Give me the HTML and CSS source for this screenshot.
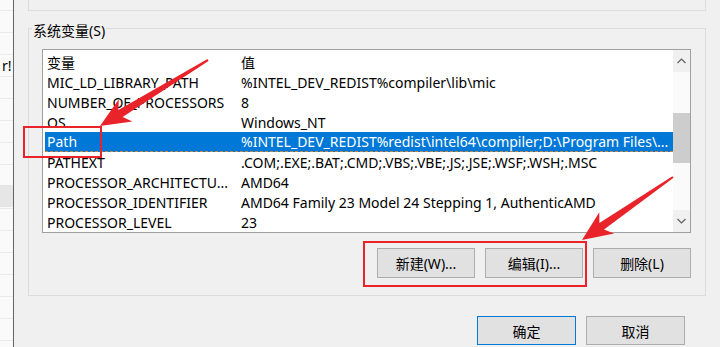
FILE: index.html
```html
<!DOCTYPE html>
<html lang="zh-CN">
<head>
    <meta charset="UTF-8">
    <title>环境变量</title>
    <link rel="stylesheet" href="styles.css">
</head>
<body>
    <div class="screen">
        <div class="behind">
            <div class="behind-text">r!</div>
            <div class="behind-block"></div>
        </div>
        <div class="dialog">
            <div class="upper-group"></div>
            <div class="group">
                <div class="legend">系统变量(S)</div>
                <div class="listbox">
                    <div class="list">
                        <div class="row"><span class="c1">变量</span><span class="c2">值</span></div>
                        <div class="row"><span class="c1">MIC_LD_LIBRARY_PATH</span><span class="c2">%INTEL_DEV_REDIST%compiler\lib\mic</span></div>
                        <div class="row"><span class="c1">NUMBER_OF_PROCESSORS</span><span class="c2">8</span></div>
                        <div class="row"><span class="c1">OS</span><span class="c2">Windows_NT</span></div>
                        <div class="row selected"><span class="c1">Path</span><span class="c2">%INTEL_DEV_REDIST%redist\intel64\compiler;D:\Program Files\...</span></div>
                        <div class="row"><span class="c1">PATHEXT</span><span class="c2">.COM;.EXE;.BAT;.CMD;.VBS;.VBE;.JS;.JSE;.WSF;.WSH;.MSC</span></div>
                        <div class="row"><span class="c1">PROCESSOR_ARCHITECTU...</span><span class="c2">AMD64</span></div>
                        <div class="row"><span class="c1">PROCESSOR_IDENTIFIER</span><span class="c2">AMD64 Family 23 Model 24 Stepping 1, AuthenticAMD</span></div>
                        <div class="row"><span class="c1">PROCESSOR_LEVEL</span><span class="c2">23</span></div>
                    </div>
                    <div class="scrollbar">
                        <div class="arrow">
                            <svg width="9" height="6" viewBox="0 0 9 6"><polyline points="0.5,5 4.5,1 8.5,5" fill="none" stroke="#606060" stroke-width="1.2"/></svg>
                        </div>
                        <div class="track"><div class="thumb"></div></div>
                        <div class="arrow">
                            <svg width="9" height="6" viewBox="0 0 9 6"><polyline points="0.5,1 4.5,5 8.5,1" fill="none" stroke="#606060" stroke-width="1.2"/></svg>
                        </div>
                    </div>
                </div>
                <div class="actions">
                    <button class="btn">新建(W)...</button>
                    <button class="btn">编辑(I)...</button>
                    <button class="btn">删除(L)</button>
                </div>
            </div>
            <div class="footer">
                <button class="btn default">确定</button>
                <button class="btn">取消</button>
            </div>
        </div>

        <!-- red annotations drawn over the dialog -->
        <svg class="marks" width="720" height="347" viewBox="0 0 720 347">
            <rect x="24" y="127" width="77" height="30" fill="none" stroke="#e8232a" stroke-width="2"/>
            <rect x="364" y="242" width="222" height="44" fill="none" stroke="#e8232a" stroke-width="2"/>
            <polygon fill="#e8232a" points="207.5,59.1 118.4,110.1 118.8,99.3 100,126 132.4,121.5 122.6,116.9 208.5,60.9"/>
            <polygon fill="#e8232a" points="672.4,176.2 599.4,223 599.3,212.2 582,240 614.1,233.6 604,229.6 673.6,177.8"/>
        </svg>
    </div>
</body>
</html>
```

FILE: styles.css
```css
body {
    margin: 0;
    background-color: #f0f0f0;
}

.screen {
    position: relative;
    display: flex;
    width: 720px;
    height: 347px;
    overflow: hidden;
    background-color: #f0f0f0;
    font-family: "Noto Sans", "Noto Sans CJK SC", sans-serif;
    font-size: 14px;
    color: #000;
}

/* window peeking out behind the dialog */
.behind {
    flex: none;
    width: 13px;
    border-right: 1px solid #646464;
    background: repeating-linear-gradient(to bottom, #fafafa 0 10px, #ebebeb 10px 11px, #fafafa 11px 22px);
    overflow: hidden;
}
.behind-text {
    margin: 57px 0 0 2px;
    line-height: 18px;
    white-space: nowrap;
}
.behind-block {
    margin-top: 110px;
    height: 22px;
    background-color: #e6e6e6;
}

.dialog {
    flex: 1;
    display: flex;
    flex-direction: column;
}

.upper-group {
    height: 10px;
    margin: 0 14px;
    border: 1px solid #dcdcdc;
    border-top: none;
}

.group {
    margin: 17px 14px 0;
    padding: 0 14px 17px 13px;
    border: 1px solid #dcdcdc;
    display: flex;
    flex-direction: column;
}
.legend {
    width: max-content;
    margin: -7px 0 0 -10px;
    padding: 0 1px;
    line-height: 18px;
    background-color: #f0f0f0;
}

.listbox {
    display: flex;
    height: 184px;
    box-sizing: border-box;
    margin-top: 9px;
    border: 1px solid #a0a0a0;
    background-color: #fff;
}
.list {
    flex: 1;
    min-width: 0;
    padding: 2px 0 0 2px;
}
.row {
    display: flex;
    height: 20px;
    line-height: 21px;
    white-space: nowrap;
    box-sizing: border-box;
}
.c1 {
    flex: none;
    width: 194px;
    padding-left: 2px;
    box-sizing: border-box;
    overflow: hidden;
}
.c2 {
    flex: 1;
    min-width: 0;
    padding-left: 2px;
    overflow: hidden;
}
.row.selected {
    background-color: #0078d7;
    color: #fff;
    border-bottom: 1px dashed #c8893f;
    line-height: 20px;
}

.scrollbar {
    flex: none;
    width: 17px;
    display: flex;
    flex-direction: column;
}
.arrow {
    height: 22px;
    display: flex;
    align-items: center;
    justify-content: center;
    background-color: #f0f0f0;
}
.track {
    flex: 1;
    background-color: #fafafa;
}
.thumb {
    margin-top: 41px;
    height: 50px;
    background-color: #cdcdcd;
}

.btn {
    width: 98px;
    height: 30px;
    padding: 0;
    border: 1px solid #adadad;
    background-color: #e1e1e1;
    font-family: "Noto Sans", "Noto Sans CJK SC", sans-serif;
    font-size: 14px;
    color: #000;
}
.btn.default {
    border-color: #0078d7;
}

.actions {
    display: flex;
    justify-content: flex-end;
    gap: 10px;
    margin-top: 15px;
}

.footer {
    display: flex;
    justify-content: flex-end;
    gap: 10px;
    margin-top: 20px;
    padding-right: 35px;
}
.footer .btn {
    width: 99px;
    height: 29px;
}

.marks {
    position: absolute;
    left: 0;
    top: 0;
    pointer-events: none;
}
```
